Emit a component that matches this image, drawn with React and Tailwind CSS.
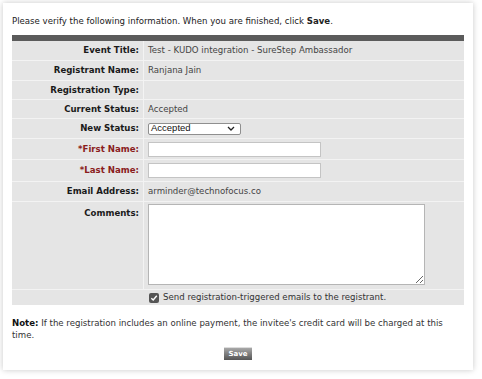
import React from 'react';

const verdana = "font-['DejaVu_Sans',Verdana,sans-serif]";
const arial = "font-['Liberation_Sans',Arial,sans-serif]";

const Label = ({ children, required }) => (
  <div
    className={`bg-[#e5e5e5] flex items-center justify-end pr-[4px] font-bold text-[8.6px] ${
      required ? 'text-[#8a1c1c]' : 'text-[#1a1a1a]'
    }`}
  >
    {required && <span>*</span>}
    {children}
  </div>
);

const Value = ({ children, className = '' }) => (
  <div className={`bg-[#e5e5e5] flex items-center pl-[4px] text-[#444] text-[8.6px] ${className}`}>
    {children}
  </div>
);

const TextInput = () => (
  <div className="w-[173px] h-[15px] bg-white border border-[#c4c4c4]" />
);

const App = () => {
  return (
    <div className={`w-[482px] h-[379px] bg-white pt-[3px] pl-[3px] ${verdana}`}>
      <div className="w-[470px] h-[367px] bg-white shadow-[0_0_6px_rgba(0,0,0,0.22)] px-[9px] pt-[12px]">
        {/* intro */}
        <p className="text-[8.6px] leading-[12px] text-[#222]">
          Please verify the following information. When you are finished, click <b>Save</b>.
        </p>

        {/* table header bar */}
        <div className="mt-[8px] h-[6px] bg-[#5b5b5b]" />

        <div className="grid grid-cols-[131px_1fr] gap-px bg-[#f3f3f3]">
          <Label>Event Title:</Label>
          <Value className="h-[19px]">Test - KUDO integration - SureStep Ambassador</Value>

          <Label>Registrant Name:</Label>
          <Value className="h-[19px]">Ranjana Jain</Value>

          <Label>Registration Type:</Label>
          <Value className="h-[18px]" />

          <Label>Current Status:</Label>
          <Value className="h-[18px]">Accepted</Value>

          <Label>New Status:</Label>
          <Value className="h-[19px]">
            <div
              className={`w-[93px] h-[12px] bg-white border border-[#8f8f8f] rounded-[2px] flex items-center justify-between pl-[2px] pr-[5px] text-[9.5px] text-[#111] ${arial}`}
            >
              <span>Accepted</span>
              <svg width="8" height="5" viewBox="0 0 8 5" fill="none">
                <path d="M1 1 L4 4 L7 1" stroke="#222" strokeWidth="1.3" />
              </svg>
            </div>
          </Value>

          <Label required>First Name:</Label>
          <Value className="h-[20px]">
            <TextInput />
          </Value>

          <Label required>Last Name:</Label>
          <Value className="h-[21px]">
            <TextInput />
          </Value>

          <Label>Email Address:</Label>
          <Value className="h-[19px]">arminder@technofocus.co</Value>

          <div className="bg-[#e5e5e5] flex justify-end pr-[4px] pt-[5px] font-bold text-[8.6px] text-[#1a1a1a]">
            Comments:
          </div>
          <div className="bg-[#e5e5e5] h-[87px] pl-[4px] pt-[2px]">
            <textarea className="block w-[277px] h-[81px] bg-white border border-[#b5b5b5] outline-none" />
          </div>

          <div className="col-span-2 bg-[#e5e5e5] h-[15px] flex items-center pl-[137px] gap-[4px] text-[8.6px] text-[#333]">
            <span className="w-[10px] h-[10px] rounded-[2px] bg-[#555] flex items-center justify-center">
              <svg width="8" height="8" viewBox="0 0 8 8" fill="none">
                <path d="M1.3 4.2 L3.2 6 L6.8 1.8" stroke="#fff" strokeWidth="1.4" />
              </svg>
            </span>
            <span>Send registration-triggered emails to the registrant.</span>
          </div>
        </div>

        {/* note */}
        <p className="mt-[12px] text-[8.6px] leading-[12px] text-[#333]">
          <b className="text-[#111]">Note:</b> If the registration includes an online payment, the invitee's credit card will be charged at this time.
        </p>

        <div className="mt-[6px] flex justify-center">
          <button className="w-[28px] h-[13px] bg-gradient-to-b from-[#a8a8a8] to-[#555] border-t border-[#ddd] text-white font-bold text-[7px] leading-none">
            Save
          </button>
        </div>
      </div>
    </div>
  );
};

export default App;
